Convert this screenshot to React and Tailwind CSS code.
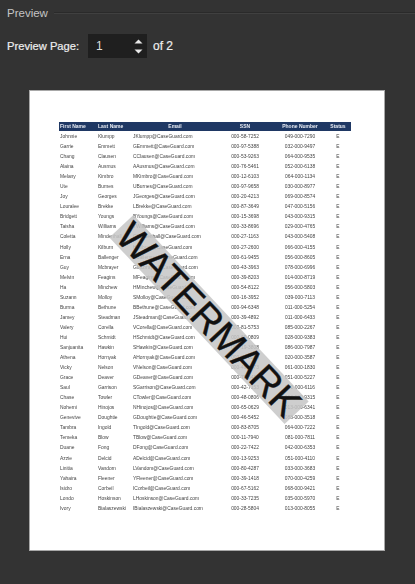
const rows = `Johnnie,Klumpp,000-58-7252,049-000-7290
Garrie,Emmett,000-97-5388,032-000-9497
Chang,Clausen,000-53-9263,064-000-9535
Alaina,Ausmus,000-76-5461,052-000-6138
Melany,Kimbro,000-12-6103,064-000-1134
Ute,Burnes,000-97-9658,030-000-8977
Joy,Georges,000-20-4213,069-000-8574
Louralee,Brekke,000-87-3649,047-000-5156
Bridgett,Youngs,000-15-3698,043-000-9315
Taisha,Williams,000-33-8696,029-000-4765
Coletta,Mindenhall,000-27-1163,043-000-5408
Holly,Kilburn,000-27-2600,066-000-4155
Erna,Ballenger,000-61-9455,056-000-8605
Guy,Mcbrayer,000-43-3963,078-000-6996
Melvin,Feagins,000-39-8203,014-000-8719
Ha,Minchew,000-54-8122,056-000-5803
Suzann,Molloy,000-16-3952,039-000-7113
Burma,Bethune,000-94-6348,011-000-5254
Jamey,Steadman,000-39-4892,011-000-6433
Valery,Corella,000-81-5753,085-000-2267
Hui,Schmidt,000-69-0809,028-000-9383
Sanjuanita,Hawkin,000-19-3808,086-000-7987
Athena,Hornyak,000-70-6224,020-000-3587
Vicky,Nelson,000-49-6373,061-000-1830
Grace,Deaver,000-72-8489,051-000-5227
Saul,Garrison,000-42-7153,042-000-6116
Chase,Towler,000-48-0806,064-000-9315
Nohemi,Hinojos,000-65-0629,013-000-6341
Genevive,Doughtie,000-46-5452,088-000-3518
Tambra,Ingold,000-83-8705,064-000-7222
Temeka,Blow,000-11-7940,081-000-7811
Duane,Fong,000-22-7422,042-000-6353
Azzie,Delcid,000-13-9253,051-000-4110
Linitia,Vandom,000-80-4287,033-000-3683
Yahaira,Fleener,000-39-1418,070-000-4259
Isidro,Corbeil,000-67-5162,068-000-9421
Londo,Hoskinson,000-33-7235,035-000-5970
Ivory,Bialaszewski,000-28-5804,013-000-8055`
  .split("\n")
  .map((l) => l.split(","));

export default function App() {
  return (
    <div className="relative w-[415px] h-[584px] overflow-hidden bg-[#333333] font-['Liberation_Sans',Arial,sans-serif]">
      <div className="flex items-center gap-[6px] pl-[7px] pt-[6px] h-[20px]">
        <span className="text-[11.5px] leading-[14px] text-[#c4c4c4]">Preview</span>
        <div className="flex-1 h-[2px] border-t border-[#2a2a2a] bg-[#404040]"></div>
      </div>

      <div className="flex items-center pl-[7px] mt-[14px] h-[24px]">
        <span className="w-[81px] text-[11.2px] text-[#eeeeee] [-webkit-text-stroke:0.2px_#eeeeee]">Preview Page:</span>
        <div className="flex items-center justify-between w-[59px] h-[24px] bg-[#1f1f1f] pl-[8px] pr-[4px]">
          <span className="text-[12px] text-[#dddddd]">1</span>
          <div className="flex flex-col gap-[5px]">
            <svg width="9" height="5" viewBox="0 0 9 5"><path d="M4.5 0.5 L8.5 4.5 H0.5 Z" fill="#e8e8e8" /></svg>
            <svg width="9" height="5" viewBox="0 0 9 5"><path d="M0.5 0.5 H8.5 L4.5 4.5 Z" fill="#e8e8e8" /></svg>
          </div>
        </div>
        <span className="ml-[6px] text-[12px] text-[#eeeeee] [-webkit-text-stroke:0.2px_#eeeeee]">of 2</span>
      </div>

      <div className="relative ml-[29px] mt-[32px] w-[356px] h-[461px] overflow-hidden bg-white border-t border-b-[1.5px] border-l border-r border-[#a8a8a8] pl-[29px] pt-[31px]">
        <div className="blur-[0.25px]">
          <div className="flex items-center w-[292px] h-[9px] bg-[#1f3864] text-[5px] font-bold text-[#e8ecf4] whitespace-nowrap">
            <span className="w-[38px] pl-[1px]">First Name</span>
            <span className="w-[35px] pl-[1px]">Last Name</span>
            <span className="w-[86px] text-center">Email</span>
            <span className="w-[54px] text-center">SSN</span>
            <span className="w-[56px] text-center">Phone Number</span>
            <span className="w-[20px] text-center">Status</span>
          </div>
          <div className="flex flex-col mt-[1px] text-[4.9px] leading-[10.05px] text-[#444444]">
            {rows.map(([f, l, s, p]) => (
              <div key={f} className="flex h-[10.05px] whitespace-nowrap">
                <span className="w-[38px] pl-[1px]">{f}</span>
                <span className="w-[35px] pl-[1px]">{l}</span>
                <span className="w-[96.5px] pl-[1px]">{f[0] + l}@CaseGuard.com</span>
                <span className="w-[33px] text-center">{s}</span>
                <span className="ml-[8px] w-[61px] text-center">{p}</span>
                <span className="w-[15px] text-center">E</span>
              </div>
            ))}
          </div>
        </div>
        <div className="absolute left-[51px] top-[212px] w-[256px] h-[33px] rotate-[46.8deg] bg-[#c6c6c6]/85 flex items-center justify-center text-[39px] leading-none text-[#111111] [-webkit-text-stroke:0.4px_#111111] whitespace-nowrap">
          WATERMARK
        </div>
      </div>
    </div>
  );
}
